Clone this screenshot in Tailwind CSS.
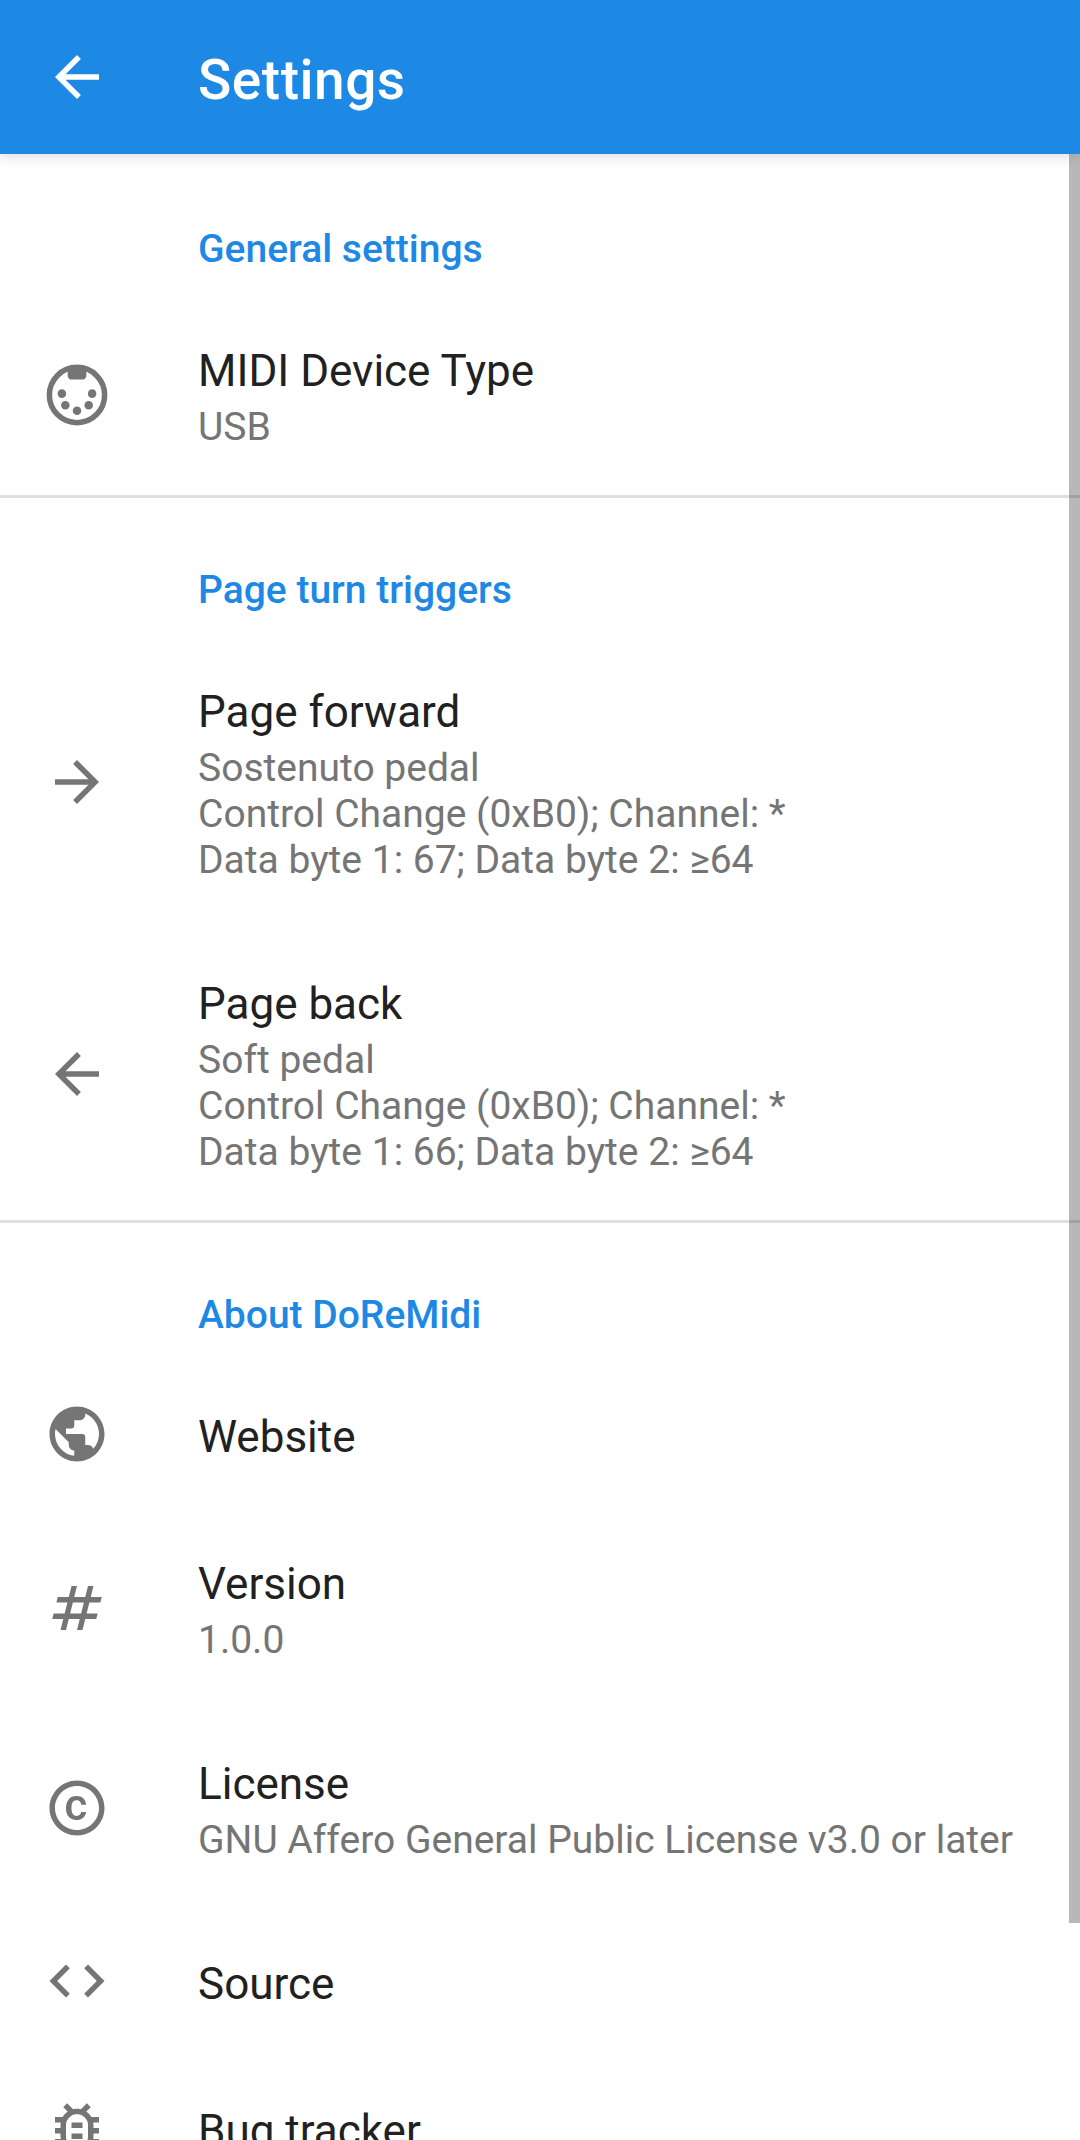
<!DOCTYPE html>
<html lang="en">
<head>
<meta charset="utf-8">
<title>Settings</title>
<script src="https://cdn.jsdelivr.net/npm/@tailwindcss/browser@4"></script>
</head>
<body class="h-[2140px] w-[1080px] overflow-hidden bg-white font-['Roboto',sans-serif] text-[#212121]">
<div class="relative flex h-[2140px] flex-col overflow-hidden">
  <header class="relative z-10 flex h-[154px] shrink-0 items-center bg-[#1e88e5] text-white shadow-[0_3px_12px_rgba(0,0,0,0.13)]">
    <svg class="ml-[44px] size-[66px] shrink-0" viewBox="0 0 24 24" fill="currentColor"><path d="M20 11H7.83l5.59-5.59L12 4l-8 8 8 8 1.41-1.41L7.83 13H20v-2z"/></svg>
    <h1 class="ml-[88px] pt-[6px] text-[55px] leading-[64px] font-medium tracking-[0.0095em]">Settings</h1>
  </header>
  <main class="shrink-0">
    <section>
      <h2 class="h-[141px] pt-[72px] pl-[198px] text-[39px] leading-[46px] font-medium text-[#1e88e5]">General settings</h2>
      <div class="flex h-[200px] items-center">
        <svg class="ml-[44px] size-[66px] shrink-0 text-[#757575]" viewBox="0 0 24 24" fill="currentColor"><circle cx="12" cy="12" r="10.05" fill="none" stroke="currentColor" stroke-width="2"/><path d="M8.600 2h6.800v2.900a1.500 1.500 0 0 1-1.500 1.500h-3.800A1.500 1.500 0 0 1 8.600 4.900z"/><circle cx="6.500" cy="11.500" r="1.550"/><circle cx="17.500" cy="11.500" r="1.550"/><circle cx="7.750" cy="15.750" r="1.550"/><circle cx="16.250" cy="15.750" r="1.550"/><circle cx="12" cy="17.750" r="1.550"/></svg>
        <div class="ml-[88px] h-[112px] pt-[3px]"><p class="text-[44px] leading-[58px]">MIDI Device Type</p><p class="mt-[4px] text-[39px] leading-[46px] text-[#757575]">USB</p></div>
      </div>
    </section>
    <section class="relative">
      <div class="absolute inset-x-0 top-0 h-[3px] bg-[#dfdfdf]"></div>
      <h2 class="h-[141px] pt-[72px] pl-[198px] text-[39px] leading-[46px] font-medium text-[#1e88e5]">Page turn triggers</h2>
      <div class="flex h-[292px] items-center">
        <svg class="ml-[44px] size-[66px] shrink-0 text-[#757575]" viewBox="0 0 24 24" fill="currentColor"><path d="M12 4l-1.410 1.410L16.170 11H4v2h12.170l-5.580 5.590L12 20l8-8z"/></svg>
        <div class="ml-[88px] h-[204px] pt-[3px]"><p class="text-[44px] leading-[58px]">Page forward</p><p class="mt-[4px] text-[39px] leading-[46px] text-[#757575]">Sostenuto pedal<br>Control Change (0xB0); Channel: *<br>Data byte 1: 67; Data byte 2: ≥64</p></div>
      </div>
      <div class="flex h-[292px] items-center">
        <svg class="ml-[44px] size-[66px] shrink-0 text-[#757575]" viewBox="0 0 24 24" fill="currentColor"><path d="M20 11H7.830l5.590-5.590L12 4l-8 8 8 8 1.410-1.410L7.830 13H20v-2z"/></svg>
        <div class="ml-[88px] h-[204px] pt-[3px]"><p class="text-[44px] leading-[58px]">Page back</p><p class="mt-[4px] text-[39px] leading-[46px] text-[#757575]">Soft pedal<br>Control Change (0xB0); Channel: *<br>Data byte 1: 66; Data byte 2: ≥64</p></div>
      </div>
    </section>
    <section class="relative">
      <div class="absolute inset-x-0 top-0 h-[3px] bg-[#dfdfdf]"></div>
      <h2 class="h-[141px] pt-[72px] pl-[198px] text-[39px] leading-[46px] font-medium text-[#1e88e5]">About DoReMidi</h2>
      <div class="flex h-[147px] items-center">
        <svg class="mb-px ml-[44px] size-[66px] shrink-0 text-[#757575]" viewBox="0 0 24 24" fill="currentColor"><path d="M12 2C6.480 2 2 6.480 2 12s4.480 10 10 10 10-4.480 10-10S17.520 2 12 2zm-1 17.930c-3.950-.49-7-3.850-7-7.930 0-.62.080-1.210.21-1.790L9 15v1c0 1.100.9 2 2 2v1.930zm6.900-2.540c-.26-.81-1-1.390-1.900-1.390h-1v-3c0-.55-.45-1-1-1H8v-2h2c.55 0 1-.45 1-1V7h2c1.100 0 2-.9 2-2v-.41c2.930 1.190 5 4.060 5 7.410 0 2.080-.8 3.970-2.100 5.390z"/></svg>
        <div class="ml-[88px] h-[59px] pt-[3px]"><p class="text-[44px] leading-[58px]">Website</p></div>
      </div>
      <div class="flex h-[200px] items-center">
        <svg class="ml-[44px] size-[66px] shrink-0 text-[#757575]" viewBox="0 0 24 24" fill="currentColor"><path d="M10 4h2L8 20H6zM16 4h2l-4 16h-2zM5 8h16l-.5 2h-16zM3.500 14h16l-.5 2H3z"/></svg>
        <div class="ml-[88px] h-[112px] pt-[3px]"><p class="text-[44px] leading-[58px]">Version</p><p class="mt-[4px] text-[39px] leading-[46px] text-[#757575]">1.0.0</p></div>
      </div>
      <div class="flex h-[200px] items-center">
        <svg class="ml-[44px] size-[66px] shrink-0 text-[#757575]" viewBox="0 0 24 24" fill="currentColor"><path d="M10.080 10.860c.05-.33.160-.62.300-.87s.34-.46.590-.62c.24-.15.540-.22.910-.23.230.010.440.050.630.130.200.090.380.210.520.360s.25.330.34.530.130.420.140.640h1.790c-.02-.47-.11-.9-.28-1.290s-.4-.73-.7-1.010-.66-.5-1.080-.66-.88-.23-1.390-.23c-.65 0-1.220.110-1.700.340s-.88.530-1.200.920-.56.840-.71 1.360S8 11.290 8 11.870v.27c0 .58.080 1.120.23 1.640s.39.970.71 1.350.72.690 1.200.91 1.050.34 1.700.34c.47 0 .91-.08 1.320-.23s.77-.36 1.080-.63.560-.58.740-.94.290-.74.300-1.150h-1.790c-.01.210-.06.400-.15.580s-.21.330-.36.460-.32.230-.52.300c-.19.070-.39.090-.6.100-.36-.01-.66-.08-.89-.23-.25-.16-.45-.37-.59-.62s-.25-.55-.3-.88-.08-.67-.08-1v-.27c0-.35.030-.68.080-1.010zM12 2C6.480 2 2 6.480 2 12s4.480 10 10 10 10-4.480 10-10S17.520 2 12 2zm0 18c-4.410 0-8-3.590-8-8s3.590-8 8-8 8 3.590 8 8-3.590 8-8 8z"/></svg>
        <div class="ml-[88px] h-[112px] pt-[3px] whitespace-nowrap"><p class="text-[44px] leading-[58px]">License</p><p class="mt-[4px] text-[39px] leading-[46px] text-[#757575]">GNU Affero General Public License v3.0 or later</p></div>
      </div>
      <div class="flex h-[147px] items-center">
        <svg class="mb-px ml-[44px] size-[66px] shrink-0 text-[#757575]" viewBox="0 0 24 24" fill="currentColor"><path d="M9.400 16.600L4.800 12l4.600-4.600L8 6l-6 6 6 6 1.400-1.400zm5.200 0l4.600-4.600-4.600-4.600L16 6l6 6-6 6-1.400-1.400z"/></svg>
        <div class="ml-[88px] h-[59px] pt-[3px]"><p class="text-[44px] leading-[58px]">Source</p></div>
      </div>
      <div class="flex h-[147px] items-center">
        <svg class="mb-px ml-[44px] size-[66px] shrink-0 text-[#757575]" viewBox="0 0 24 24" fill="currentColor"><path d="M20 8h-2.810c-.45-.78-1.070-1.450-1.820-1.960L17 4.410 15.590 3l-2.170 2.170C12.960 5.060 12.490 5 12 5s-.96.060-1.410.170L8.410 3 7 4.410l1.620 1.630C7.880 6.550 7.260 7.220 6.810 8H4v2h2.090c-.05.33-.09.660-.09 1v1H4v2h2v1c0 .34.040.67.090 1H4v2h2.810c1.040 1.790 2.970 3 5.190 3s4.150-1.210 5.190-3H20v-2h-2.090c.05-.33.090-.66.090-1v-1h2v-2h-2v-1c0-.34-.04-.67-.09-1H20V8zm-4 4v3c0 .22-.03.470-.07.700l-.1.650-.37.650c-.72 1.240-2.040 2-3.460 2s-2.740-.77-3.460-2l-.37-.64-.1-.65C8.030 15.480 8 15.230 8 15v-4c0-.23.030-.48.070-.7l.1-.65.370-.65c.3-.52.720-.97 1.210-1.310l.57-.39.740-.18c.31-.08.630-.12.940-.12.320 0 .63.040.95.120l.68.160.61.420c.5.340.91.780 1.210 1.310l.38.650.1.650c.04.220.07.470.07.690v1zm-6 2h4v2h-4zm0-4h4v2h-4z"/></svg>
        <div class="ml-[88px] h-[59px] pt-[3px]"><p class="text-[44px] leading-[58px]">Bug tracker</p></div>
      </div>
    </section>
  </main>
  <div class="absolute top-[154px] right-0 h-[1769px] w-[11px] bg-black/28"></div>
</div>
</body>
</html>
